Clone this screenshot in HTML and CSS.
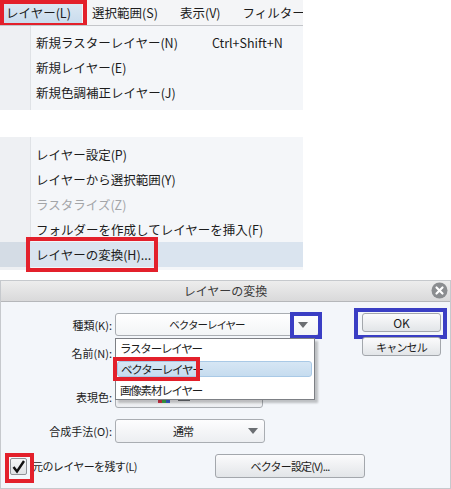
FILE: index.html
```html
<!DOCTYPE html>
<html lang="ja">
	<head>
		<meta charset="utf-8">
		<meta name="viewport" content="width=device-width">
		<title>レイヤーの変換</title>
		<link rel="stylesheet" href="styles.css">
	</head>

	<body>
		<section class="menu-shot">
			<nav class="menubar">
				<span class="menubar-item is-open">レイヤー(L)<i class="mark mark-red mark-menubar"></i></span>
				<span class="menubar-item">選択範囲(S)</span>
				<span class="menubar-item">表示(V)</span>
				<span class="menubar-item">フィルター</span>
			</nav>
			<ul class="menu-panel">
				<li class="menu-row"><span class="menu-label">新規ラスターレイヤー(N)</span><span class="shortcut">Ctrl+Shift+N</span></li>
				<li class="menu-row"><span class="menu-label">新規レイヤー(E)</span></li>
				<li class="menu-row"><span class="menu-label">新規色調補正レイヤー(J)</span></li>
			</ul>
			<ul class="menu-panel menu-panel-lower">
				<li class="menu-row"><span class="menu-label">レイヤー設定(P)</span></li>
				<li class="menu-row"><span class="menu-label">レイヤーから選択範囲(Y)</span></li>
				<li class="menu-row is-disabled"><span class="menu-label">ラスタライズ(Z)</span></li>
				<li class="menu-row"><span class="menu-label">フォルダーを作成してレイヤーを挿入(F)</span></li>
				<li class="menu-row is-hover"><span class="menu-label">レイヤーの変換(H)...<i class="mark mark-red mark-convert"></i></span></li>
			</ul>
		</section>

		<section class="dialog">
			<header class="dialog-title">
				レイヤーの変換
				<svg class="dialog-close" width="17" height="17" viewBox="0 0 17 17">
					<circle cx="8.5" cy="8.5" r="8" fill="#8b8d90"/>
					<path d="M5.5 5.5 L11.5 11.5 M11.5 5.5 L5.5 11.5" stroke="#fff" stroke-width="2.2" stroke-linecap="round"/>
				</svg>
			</header>

			<div class="dialog-body">
				<div class="dialog-top">
					<div class="form">
						<div class="field">
							<label class="field-label">種類(K):</label>
							<div class="combo combo-kind">
								<span class="combo-value">ベクターレイヤー</span>
								<span class="combo-arrow"></span>
								<i class="mark mark-blue mark-arrow"></i>
								<ul class="combo-list">
									<li class="combo-option">ラスターレイヤー</li>
									<li class="combo-option is-selected">ベクターレイヤー<i class="mark mark-red mark-option"></i></li>
									<li class="combo-option">画像素材レイヤー</li>
								</ul>
							</div>
						</div>
						<div class="field field-name">
							<label class="field-label">名前(N):</label>
							<input class="text-input" type="text" value="">
						</div>
						<div class="field field-color">
							<label class="field-label">表現色:</label>
							<div class="combo combo-color">
								<span class="swatch"></span>
								<span class="swatch-text"></span>
							</div>
						</div>
						<div class="field field-blend">
							<label class="field-label">合成手法(O):</label>
							<div class="combo combo-blend">
								<span class="combo-value">通常</span>
								<span class="combo-arrow"></span>
							</div>
						</div>
					</div>

					<div class="actions">
						<button class="btn btn-ok">OK<i class="mark mark-blue mark-ok"></i></button>
						<button class="btn">キャンセル</button>
					</div>
				</div>

				<div class="dialog-bottom">
					<label class="check">
						<span class="check-box">
							<svg width="15" height="15" viewBox="0 0 15 15">
								<path d="M2.5 8 L6 12.5 L13 2" fill="none" stroke="#111" stroke-width="2.4"/>
							</svg>
							<i class="mark mark-red mark-check"></i>
						</span>
						<span class="check-label">元のレイヤーを残す(L)</span>
					</label>
					<button class="btn btn-vector">ベクター設定(V)...</button>
				</div>
			</div>
		</section>
	</body>

</html>
```

FILE: styles.css
```css
html, body {
	margin: 0;
	background: #fff;
}
body {
	width: 451px;
	height: 489px;
	overflow: hidden;
	font-family: "Noto Sans CJK JP", "Noto Sans", sans-serif;
	color: #1c1c1c;
}
ul {
	margin: 0;
	padding: 0;
	list-style: none;
}
.mark {
	position: absolute;
	box-sizing: border-box;
	pointer-events: none;
}
.mark-red {
	border: 4px solid #e3202b;
}
.mark-blue {
	border: 4px solid #3a3ec4;
}

/* menu screenshot */
.menu-shot {
	width: 303px;
}
.menubar {
	display: flex;
	align-items: center;
	height: 25px;
	background: #f4f5f7;
	border-bottom: 1px solid #c4c6ca;
	font-size: 12.5px;
	white-space: nowrap;
	overflow: hidden;
}
.menubar-item {
	flex-shrink: 0;
	height: 20px;
	line-height: 20px;
	margin-left: 10px;
	margin-right: 12px;
}
.menubar-item.is-open {
	position: relative;
	width: 76px;
	margin: 0 0 0 4px;
	padding-left: 2px;
	background: linear-gradient(#dce8f3, #c9dced);
}
.mark-menubar {
	left: -4px;
	right: -5px;
	top: -3px;
	bottom: -4px;
}
.menu-panel {
	padding: 4px 0 5px;
	background: linear-gradient(90deg, #eef0f3 30px, #dfe2e6 30px, #dfe2e6 31px, #f4f6f9 31px);
	font-size: 12.5px;
}
.menu-panel-lower {
	margin-top: 27px;
	padding: 5px 0 3px;
}
.menu-row {
	display: flex;
	height: 25px;
	line-height: 25px;
	padding-left: 36px;
	white-space: nowrap;
}
.menu-label {
	position: relative;
}
.shortcut {
	margin-left: 34px;
}
.menu-row.is-disabled {
	color: #a3a5a8;
}
.menu-row.is-hover {
	background: linear-gradient(90deg, #d4dce5 30px, #dae4ef 30px);
}
.mark-convert {
	left: -10px;
	right: -7px;
	top: -5px;
	bottom: -5px;
}

/* dialog */
.dialog {
	margin-top: 10px;
	height: 209px;
	box-sizing: border-box;
	border: 1px solid #c6c9cd;
	display: flex;
	flex-direction: column;
	background: #f3f6fa;
	font-size: 11px;
}
.dialog-title {
	position: relative;
	height: 20px;
	line-height: 20px;
	text-align: center;
	font-size: 12px;
	color: #3a3a3a;
	background: linear-gradient(#ededed, #d9d9da);
	border-bottom: 1px solid #b5b7ba;
}
.dialog-close {
	position: absolute;
	right: 2px;
	top: 1px;
}
.dialog-body {
	flex: 1;
	padding-top: 11px;
}
.dialog-top {
	display: flex;
}
.form {
	flex: 1;
	display: flex;
	flex-direction: column;
}
.field {
	display: grid;
	grid-template-columns: 111px auto;
	column-gap: 3px;
	align-items: center;
	height: 23px;
}
.field-name {
	margin-top: 5px;
}
.field-color {
	margin-top: 21px;
}
.field-blend {
	margin-top: 11px;
	height: 24px;
}
.field-label {
	text-align: right;
	white-space: nowrap;
}
.combo {
	position: relative;
	display: flex;
	align-items: center;
	height: 100%;
	box-sizing: border-box;
	border: 1px solid #a9adb2;
	border-radius: 3px;
	background: linear-gradient(#fdfdfe, #eceef1);
}
.combo-value {
	flex: 1;
	text-align: center;
	font-size: 10.5px;
	letter-spacing: -1px;
}
.combo-arrow {
	width: 0;
	height: 0;
	margin: 0 6px 0 4px;
	border-left: 5px solid transparent;
	border-right: 5px solid transparent;
	border-top: 6px solid #6b6e72;
}
.combo-kind {
	width: 204px;
	background: linear-gradient(#ffffff, #f2f4f6);
}
.combo-kind .combo-value {
	padding-left: 4px;
}
.combo-kind .combo-arrow {
	margin-right: 10px;
}
.mark-arrow {
	left: 174px;
	top: -2px;
	width: 32px;
	height: 27px;
}
.combo-list {
	position: absolute;
	z-index: 2;
	left: -1px;
	top: 24px;
	width: 200px;
	height: 62px;
	box-sizing: border-box;
	padding: 1px 2px 1px 1px;
	background: #fff;
	border: 1px solid #7d8085;
	box-shadow: 3px 3px 2px rgba(0, 0, 0, 0.22);
}
.combo-option {
	position: relative;
	height: 16px;
	line-height: 16px;
	padding-left: 3px;
	margin-bottom: 5px;
	font-size: 11.5px;
	letter-spacing: -1.2px;
	white-space: nowrap;
}
.combo-option.is-selected {
	box-sizing: border-box;
	background: linear-gradient(#d6e6f4, #c6dcef);
	border: 1px solid #a9c9e6;
	border-radius: 3px;
	line-height: 14px;
}
.mark-option {
	left: -5px;
	top: -5px;
	width: 87px;
	height: 24px;
}
.text-input {
	width: 200px;
	height: 21px;
	box-sizing: border-box;
	border: 1px solid #a9adb2;
	background: #fff;
}
.combo-color {
	width: 148px;
}
.swatch {
	width: 12px;
	height: 12px;
	margin-left: 42px;
	background: linear-gradient(90deg, #d8344a 33%, #3fae4a 33%, #3fae4a 66%, #3a62d2 66%);
}
.swatch-text {
	width: 12px;
	height: 3px;
	margin: 6px 0 0 8px;
	background: #6a6d72;
}
.combo-blend {
	width: 150px;
}
.combo-blend .combo-value {
	padding-left: 6px;
	font-size: 11px;
}

.actions {
	display: flex;
	flex-direction: column;
	gap: 5px;
	width: 79px;
	margin-right: 9px;
}
.btn {
	position: relative;
	height: 19px;
	padding: 0;
	box-sizing: border-box;
	border: 1px solid #a3a7ac;
	border-radius: 3px;
	background: linear-gradient(#fbfbfc, #e2e5e8);
	font-family: inherit;
	font-size: 11px;
	color: #1c1c1c;
	letter-spacing: -0.8px;
	line-height: 16px;
}
.btn-ok {
	font-size: 12px;
	letter-spacing: 0;
}
.mark-ok {
	left: -9px;
	top: -6px;
	width: 93px;
	height: 31px;
}

.dialog-bottom {
	display: flex;
	align-items: center;
	height: 24px;
	margin-top: 11px;
	padding-left: 9px;
}
.check {
	display: flex;
	align-items: center;
	width: 205px;
}
.check-box {
	position: relative;
	display: flex;
	align-items: center;
	justify-content: center;
	width: 17px;
	height: 17px;
	box-sizing: border-box;
	border: 1px solid #8e9297;
	border-radius: 2px;
	background: linear-gradient(#f6f7f8, #dfe2e5);
}
.mark-check {
	left: -6px;
	top: -6px;
	width: 29px;
	height: 30px;
}
.check-label {
	margin-left: 5px;
	letter-spacing: -0.6px;
	white-space: nowrap;
}
.btn-vector {
	width: 150px;
	height: 24px;
}
```
